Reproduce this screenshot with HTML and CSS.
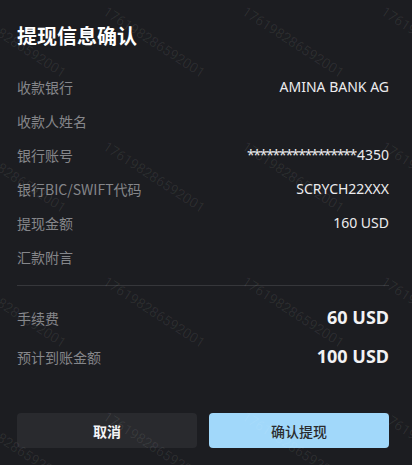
FILE: index.html
```html
<!DOCTYPE html>
<html lang="zh-CN">
<head>
<meta charset="utf-8">
<title>提现信息确认</title>
<link rel="stylesheet" href="styles.css">
</head>
<body>
<div class="sheet">
  <h1 class="title">提现信息确认</h1>
  <div class="rows">
    <div class="row"><span class="label">收款银行</span><span class="value">AMINA BANK AG</span></div>
    <div class="row"><span class="label">收款人姓名</span><span class="value"></span></div>
    <div class="row"><span class="label">银行账号</span><span class="value"><span class="mask">*****************</span>4350</span></div>
    <div class="row"><span class="label">银行BIC/SWIFT代码</span><span class="value">SCRYCH22XXX</span></div>
    <div class="row"><span class="label">提现金额</span><span class="value">160 USD</span></div>
    <div class="row"><span class="label">汇款附言</span><span class="value"></span></div>
  </div>
  <div class="divider"></div>
  <div class="totals">
    <div class="row big"><span class="label">手续费</span><span class="value">60 USD</span></div>
    <div class="row big"><span class="label">预计到账金额</span><span class="value">100 USD</span></div>
  </div>
  <div class="actions">
    <button class="btn btn-cancel">取消</button>
    <button class="btn btn-confirm">确认提现</button>
  </div>
  <div class="watermark" aria-hidden="true">
    <span>176198286592001</span><span>176198286592001</span><span>176198286592001</span><span>176198286592001</span>
    <span>176198286592001</span><span>176198286592001</span><span>176198286592001</span><span>176198286592001</span>
    <span>176198286592001</span><span>176198286592001</span><span>176198286592001</span><span>176198286592001</span>
    <span>176198286592001</span><span>176198286592001</span><span>176198286592001</span><span>176198286592001</span>
  </div>
</div>
</body>
</html>
```
FILE: styles.css
```css
* { box-sizing: border-box; }
html, body {
  margin: 0;
  padding: 0;
  background: #1c1d21;
}
body {
  font-family: "Noto Sans", "Noto Sans CJK SC", sans-serif;
  color: #e8e8ea;
}
.sheet {
  position: relative;
  width: 412px;
  height: 465px;
  overflow: hidden;
  padding: 22px 23px 17px 17px;
  display: flex;
  flex-direction: column;
}
.title {
  margin: 0;
  font-size: 20px;
  line-height: 28px;
  font-weight: 700;
  color: #ffffff;
  font-family: "Noto Sans CJK SC", sans-serif;
}
.rows {
  margin-top: 27px;
  display: flex;
  flex-direction: column;
  gap: 14px;
}
.row {
  display: flex;
  justify-content: space-between;
  align-items: center;
  height: 20px;
  font-size: 14px;
  line-height: 20px;
}
.label {
  color: #85868a;
  font-family: "Noto Sans CJK SC", sans-serif;
}
.value {
  color: #ececee;
}
.mask {
  letter-spacing: -1.3px;
  margin-right: 1px;
}
.divider {
  margin-top: 18px;
  height: 1px;
  background: #36373b;
}
.totals {
  margin-top: 19px;
  display: flex;
  flex-direction: column;
  gap: 15px;
}
.row.big {
  height: 24px;
  line-height: 24px;
  align-items: baseline;
}
.row.big .value {
  font-size: 18px;
  font-weight: 700;
  color: #f2f2f4;
}
.actions {
  margin-top: auto;
  display: flex;
  gap: 12px;
}
.btn {
  flex: 1;
  height: 35px;
  border: none;
  border-radius: 4px;
  font-family: "Noto Sans CJK SC", sans-serif;
  font-size: 14px;
}
.btn-cancel {
  background: #292a2e;
  color: #f4f4f6;
  font-weight: 700;
}
.btn-confirm {
  background: #a1d8fa;
  color: #2a2b2e;
  font-weight: 500;
}
.watermark {
  position: absolute;
  left: -30px;
  top: 3px;
  display: grid;
  grid-template-columns: repeat(4, 139px);
  grid-auto-rows: 135px;
  pointer-events: none;
}
.watermark span {
  display: block;
  white-space: nowrap;
  font-family: Roboto, sans-serif;
  font-size: 14px;
  line-height: 16px;
  color: rgba(255, 255, 255, 0.07);
  transform: rotate(33deg);
  transform-origin: 0 0;
}
```
